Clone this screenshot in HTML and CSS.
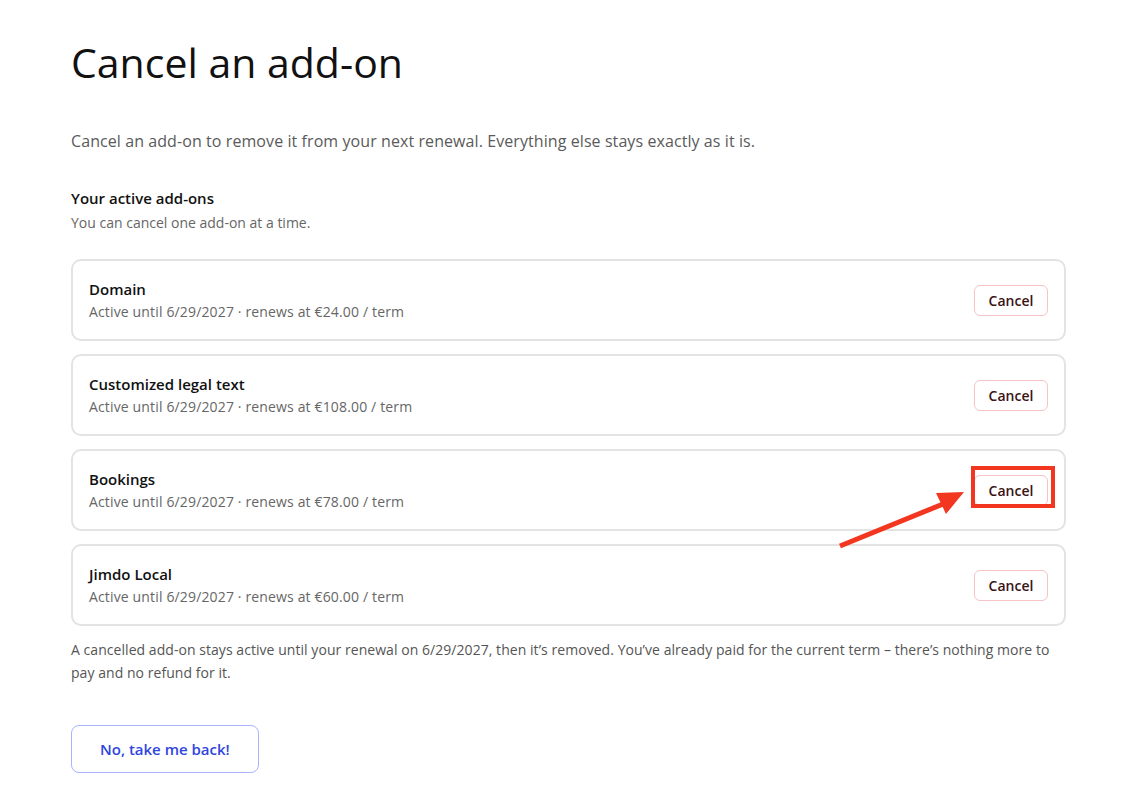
FILE: index.html
```html
<!DOCTYPE html>
<html lang="en">
<head>
  <meta charset="UTF-8" />
  <title>Cancel an add-on</title>
  <link rel="stylesheet" href="styles.css">
</head>
<body>

<div class="page">
  <h1 class="title">Cancel an add-on</h1>
  <p class="intro">Cancel an add-on to remove it from your next renewal. Everything else stays exactly as it is.</p>

  <div class="section-head">
    <div class="section-title">Your active add-ons</div>
    <div class="section-note">You can cancel one add-on at a time.</div>
  </div>

  <div class="addons">
    <div class="addon">
      <div class="addon-info">
        <div class="addon-name">Domain</div>
        <div class="addon-meta">Active until 6/29/2027 · renews at €24.00 / term</div>
      </div>
      <button class="cancel-btn">Cancel</button>
    </div>

    <div class="addon">
      <div class="addon-info">
        <div class="addon-name">Customized legal text</div>
        <div class="addon-meta">Active until 6/29/2027 · renews at €108.00 / term</div>
      </div>
      <button class="cancel-btn">Cancel</button>
    </div>

    <div class="addon">
      <div class="addon-info">
        <div class="addon-name">Bookings</div>
        <div class="addon-meta">Active until 6/29/2027 · renews at €78.00 / term</div>
      </div>
      <div class="marked">
        <button class="cancel-btn">Cancel</button>
        <span class="mark-box"></span>
      </div>
    </div>

    <div class="addon">
      <div class="addon-info">
        <div class="addon-name">Jimdo Local</div>
        <div class="addon-meta">Active until 6/29/2027 · renews at €60.00 / term</div>
      </div>
      <button class="cancel-btn">Cancel</button>
    </div>
  </div>

  <p class="footnote">A cancelled add-on stays active until your renewal on 6/29/2027, then it’s removed. You’ve already paid for the current term – there’s nothing more to pay and no refund for it.</p>

  <button class="back-btn">No, take me back!</button>

  <!-- annotation arrow -->
  <svg class="arrow" width="140" height="70" viewBox="0 0 140 70">
    <line x1="4" y1="60" x2="112" y2="16" stroke="#f2361f" stroke-width="5" />
    <polygon points="128,6 100,7 110,28" fill="#f2361f" />
  </svg>
</div>

</body>
</html>
```

FILE: styles.css
```css
body {
  margin: 0;
  background: #fff;
  font-family: 'Open Sans', 'Noto Sans', sans-serif;
  color: #111;
}

.page {
  position: relative;
  width: 995px;
  padding: 38px 0 0 71px;
}

.title {
  margin: 0;
  font-size: 41px;
  line-height: 48px;
  font-weight: 400;
  color: #111;
}

.intro {
  margin: 43px 0 0;
  font-size: 16px;
  line-height: 24px;
  letter-spacing: 0.08px;
  color: #5a5a5a;
}

.section-head {
  margin-top: 34px;
}

.section-title {
  font-size: 15px;
  line-height: 22px;
  font-weight: 600;
  color: #111;
}

.section-note {
  margin-top: 4px;
  font-size: 14px;
  line-height: 20px;
  color: #666;
}

.addons {
  margin-top: 26px;
  display: flex;
  flex-direction: column;
  gap: 13px;
}

.addon {
  height: 82px;
  box-sizing: border-box;
  border: 2px solid #e3e3e3;
  border-radius: 10px;
  padding: 0 16px;
  display: flex;
  align-items: center;
  justify-content: space-between;
}

.addon-name {
  font-size: 15px;
  line-height: 20px;
  font-weight: 600;
  color: #111;
}

.addon-meta {
  margin-top: 3px;
  font-size: 14px;
  line-height: 20px;
  letter-spacing: 0.15px;
  color: #666;
}

.cancel-btn {
  width: 74px;
  height: 31px;
  border: 1px solid #f6c4c4;
  border-radius: 6px;
  background: #fff;
  color: #3a1414;
  font-family: inherit;
  font-size: 14px;
  font-weight: 600;
  cursor: pointer;
}

.marked {
  position: relative;
  display: flex;
}

.mark-box {
  position: absolute;
  left: -3px;
  top: -9px;
  right: -7px;
  bottom: -2px;
  border: 4px solid #f2361f;
}

.footnote {
  margin: 12px 0 0;
  font-size: 14px;
  line-height: 23px;
  letter-spacing: 0.05px;
  color: #555;
}

.back-btn {
  margin-top: 41px;
  height: 48px;
  padding: 0 28px;
  border: 1px solid #a9b3ff;
  border-radius: 8px;
  background: #fff;
  color: #2f45e0;
  font-family: inherit;
  font-size: 15px;
  font-weight: 600;
  cursor: pointer;
}

.arrow {
  position: absolute;
  left: 836px;
  top: 486px;
}
```
